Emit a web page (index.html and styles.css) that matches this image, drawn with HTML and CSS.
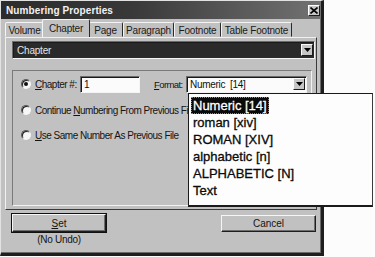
FILE: index.html
```html
<!DOCTYPE html>
<html>
<head>
<meta charset="utf-8">
<link rel="stylesheet" href="styles.css">
</head>
<body>
<div class="dialog">
  <div class="titlebar">
    <span class="title">Numbering Properties</span>
    <span class="close"><svg width="8" height="7" viewBox="0 0 8 7"><path d="M0.5 0.5 L7.5 6.5 M7.5 0.5 L0.5 6.5" stroke="#000" stroke-width="1.6"/></svg></span>
  </div>
  <div class="tabs">
    <span class="tab w-vol">Volume</span>
    <span class="tab active w-chap">Chapter</span>
    <span class="tab w-page">Page</span>
    <span class="tab w-para">Paragraph</span>
    <span class="tab w-foot">Footnote</span>
    <span class="tab w-table">Table Footnote</span>
  </div>
  <div class="sheet">
    <div class="combo dark">
      <span class="combo-text">Chapter</span>
      <span class="arrow"><svg width="7" height="4" viewBox="0 0 7 4"><path d="M0 0 H7 L3.5 4 Z" fill="#000"/></svg></span>
    </div>
    <div class="group">
      <div class="row first">
        <span class="radio checked"></span>
        <span class="lbl lbl-chap"><u>C</u>hapter #:</span>
        <span class="input">1</span>
        <span class="lbl lbl-fmt"><u>F</u>ormat:</span>
        <div class="combo white">
          <span class="combo-text">Numeric&nbsp; [14]</span>
          <span class="arrow"><svg width="7" height="4" viewBox="0 0 7 4"><path d="M0 0 H7 L3.5 4 Z" fill="#000"/></svg></span>
        </div>
      </div>
      <div class="row">
        <span class="radio"></span>
        <span class="lbl">Continue <u>N</u>umbering From Previous File</span>
      </div>
      <div class="row">
        <span class="radio"></span>
        <span class="lbl"><u>U</u>se Same Number As Previous File</span>
      </div>
    </div>
  </div>
  <div class="buttons">
    <div class="btncol">
      <span class="btn default"><u>S</u>et</span>
      <span class="note">(No Undo)</span>
    </div>
    <span class="btn cancel">Cancel</span>
  </div>
  <ul class="list">
    <li><span class="sel">Numeric [14]</span></li>
    <li><span>roman [xiv]</span></li>
    <li><span>ROMAN [XIV]</span></li>
    <li><span>alphabetic [n]</span></li>
    <li><span>ALPHABETIC [N]</span></li>
    <li><span>Text</span></li>
  </ul>
</div>
</body>
</html>
```

FILE: styles.css
```css
html, body {
  margin: 0;
  padding: 0;
  background: #fcfcfc;
}

body {
  font-family: "Liberation Sans", Arial, sans-serif;
  font-size: 10px;
  color: #111;
}

.dialog {
  position: relative;
  box-sizing: border-box;
  width: 324px;
  height: 256px;
  background: #c1c1c1;
  border-top: 1px solid #e2e2e2;
  border-left: 1px solid #e2e2e2;
  border-right: 3px solid #1e1e1e;
  border-bottom: 3px solid #1e1e1e;
  box-shadow: inset -1px -1px 0 #6a6a6a;
  display: flex;
  flex-direction: column;
}

.titlebar {
  height: 18px;
  background: linear-gradient(to right, #2c2c2c 0%, #383838 40%, #727272 100%);
  display: flex;
  align-items: center;
  justify-content: space-between;
  padding: 0 1px 0 5px;
}

.title {
  color: #f2f2f2;
  font-weight: bold;
  font-size: 10px;
  letter-spacing: 0.1px;
}

.close {
  width: 12px;
  height: 11px;
  box-sizing: border-box;
  background: #c6c6c6;
  border: 1px solid;
  border-color: #fff #1c1c1c #1c1c1c #fff;
  display: flex;
  align-items: center;
  justify-content: center;
  margin-top: 1px;
}

.close svg { display: block; }

.tabs {
  display: flex;
  align-items: flex-end;
  height: 17px;
  margin-top: 1px;
  padding-left: 4px;
}

.tab {
  box-sizing: border-box;
  height: 15px;
  background: #c1c1c1;
  border: 1px solid;
  border-color: #f4f4f4 #2a2a2a transparent #f4f4f4;
  border-radius: 2px 2px 0 0;
  display: flex;
  align-items: center;
  justify-content: center;
  font-size: 10px;
  letter-spacing: -0.2px;
  color: #1a1a1a;
  padding-top: 1px;
}

.tab.active {
  position: relative;
  z-index: 1;
  height: 18px;
  margin: 0 -2px 0 -2px;
  padding-bottom: 2px;
  border-bottom: none;
}

.w-vol { width: 39px; }
.w-chap { width: 48px; }
.w-page { width: 35px; }
.w-para { width: 51px; }
.w-foot { width: 47px; }
.w-table { width: 71px; }

.sheet {
  margin: 0 4px 0 4px;
  border: 1px solid;
  border-color: #f0f0f0 #3a3a3a #3a3a3a #f0f0f0;
  padding: 3px 1px 3px 6px;
}

.combo {
  display: flex;
  align-items: center;
  justify-content: space-between;
  box-sizing: border-box;
  border: 1px solid;
  border-color: #6a6a6a #f4f4f4 #f4f4f4 #6a6a6a;
  box-shadow: inset 1px 1px 0 #1a1a1a;
}

.combo.dark {
  height: 18px;
  background: #2a2a2a;
  padding: 0 1px 0 4px;
}

.combo.dark .combo-text {
  color: #e4e4e4;
  font-size: 10px;
  letter-spacing: -0.2px;
}

.combo.white {
  width: 121px;
  height: 17px;
  background: #fbfbfb;
  padding: 0 1px 0 3px;
}

.combo.white .combo-text {
  font-size: 10px;
  letter-spacing: -0.3px;
  color: #111;
}

.arrow {
  width: 12px;
  height: 12px;
  box-sizing: border-box;
  background: #c6c6c6;
  border: 1px solid;
  border-color: #fafafa #1c1c1c #1c1c1c #fafafa;
  display: flex;
  align-items: center;
  justify-content: center;
}

.arrow svg { display: block; }

.group {
  margin: 11px 3px 0 0;
  height: 136px;
  box-sizing: border-box;
  border: 1px solid;
  border-color: #7a7a7a #f2f2f2 #f2f2f2 #7a7a7a;
  padding: 4px 0 0 8px;
}

.row {
  display: flex;
  align-items: center;
  height: 16px;
  margin-top: 9px;
  white-space: nowrap;
}

.row.first {
  height: 18px;
  margin-top: 0;
}

.radio {
  width: 10px;
  height: 10px;
  box-sizing: border-box;
  border-radius: 50%;
  background: #f6f6f6;
  border: 1px solid;
  border-color: #5a5a5a #f4f4f4 #f4f4f4 #5a5a5a;
  box-shadow: inset 1px 1px 0 #1e1e1e;
  position: relative;
  flex: none;
}

.radio.checked::after {
  content: "";
  position: absolute;
  left: 2px;
  top: 2px;
  width: 4px;
  height: 4px;
  border-radius: 50%;
  background: #111;
}

.lbl {
  margin-left: 4px;
  font-size: 10px;
  letter-spacing: -0.5px;
  color: #141414;
}

.lbl-chap { width: 45px; flex: none; }
.lbl-fmt { width: 32px; margin-left: 14px; flex: none; font-size: 9.5px; letter-spacing: -0.6px; }

.input {
  width: 60px;
  height: 17px;
  box-sizing: border-box;
  background: #fbfbfb;
  border: 1px solid;
  border-color: #6a6a6a #f4f4f4 #f4f4f4 #6a6a6a;
  box-shadow: inset 1px 1px 0 #1a1a1a;
  padding: 2px 0 0 3px;
  font-size: 10px;
  line-height: 12px;
}

.buttons {
  display: flex;
  justify-content: space-between;
  align-items: flex-start;
  margin-top: 4px;
  padding: 0 5px 0 11px;
}

.btncol {
  display: flex;
  flex-direction: column;
  align-items: center;
}

.btn {
  box-sizing: border-box;
  height: 18px;
  display: flex;
  align-items: center;
  justify-content: center;
  background: #c1c1c1;
  border: 1px solid;
  border-color: #f6f6f6 #1e1e1e #1e1e1e #f6f6f6;
  box-shadow: inset -1px -1px 0 #6e6e6e;
  font-size: 10px;
  color: #141414;
}

.btn.default {
  width: 94px;
  outline: 1px solid #111;
  outline-offset: 0;
}

.btn.cancel {
  width: 95px;
  margin-top: 1px;
  height: 17px;
}

.note {
  margin-top: 2px;
  font-size: 10px;
  line-height: 12px;
  letter-spacing: -0.3px;
  color: #141414;
}

.list {
  position: absolute;
  left: 187px;
  top: 92px;
  width: 185px;
  height: 114px;
  box-sizing: border-box;
  margin: 0;
  padding: 3px 0 0 2px;
  list-style: none;
  background: #fdfdfd;
  border: 1px solid #1a1a1a;
  border-bottom-width: 2px;
  border-right-color: #3a3a3a;
  font-size: 13px;
  line-height: 17px;
  color: #0a0a0a;
  -webkit-text-stroke: 0.3px #0a0a0a;
}

.list li {
  height: 17px;
}

.list li span {
  display: inline-block;
  padding: 0 2px;
}

.list li .sel {
  background: #0a0a0a;
  color: #fff;
  -webkit-text-stroke: 0.3px #fff;
  outline: 1px dotted #888;
  outline-offset: -1px;
}
```
